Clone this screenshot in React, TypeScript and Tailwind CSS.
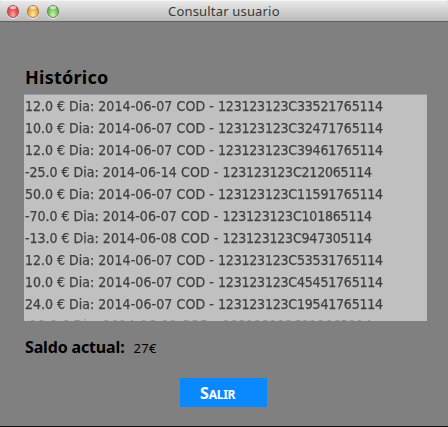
const rows = [
  ['12.0', '2014-06-07', '123123123C33521765114'],
  ['10.0', '2014-06-07', '123123123C32471765114'],
  ['12.0', '2014-06-07', '123123123C39461765114'],
  ['-25.0', '2014-06-14', '123123123C212065114'],
  ['50.0', '2014-06-07', '123123123C11591765114'],
  ['-70.0', '2014-06-07', '123123123C101865114'],
  ['-13.0', '2014-06-08', '123123123C947305114'],
  ['12.0', '2014-06-07', '123123123C53531765114'],
  ['10.0', '2014-06-07', '123123123C45451765114'],
  ['24.0', '2014-06-07', '123123123C19541765114'],
  ['-10.0', '2014-06-08', '123123123C213065114'],
];

function Light({ tone }: { tone: string }) {
  return (
    <span className={`relative block h-[13px] w-3 rounded-full border shadow-[0_1px_0_#f5f5f5] ${tone}`}>
      <span className="absolute left-[2px] top-0 h-[3px] w-[6px] rounded-full bg-white/60" />
    </span>
  );
}

export default function App() {
  return (
    <div className="flex h-[427px] w-[448px] flex-col overflow-hidden rounded-t-[3px] border-b border-[#111] bg-[#808080] font-['Noto_Sans',sans-serif] text-black">
      <header className="grid h-[22px] shrink-0 grid-cols-[168px_auto_1fr] border-b border-[#626262] bg-linear-to-b from-[#ececec] to-[#b9b9b9] shadow-[inset_0_1px_0_#f5f5f5]">
        <div className="flex gap-2 pl-[7px] pt-[5px]">
          <Light tone="border-[#a35757] bg-radial-[at_50%_85%] from-[#ffb1ad] via-[#ef555b] to-[#b83d43]" />
          <Light tone="border-[#a8804d] bg-radial-[at_50%_85%] from-[#ffeaa0] via-[#f3b653] to-[#bd7e34]" />
          <Light tone="border-[#638b55] bg-radial-[at_50%_85%] from-[#d5f4b1] via-[#88cc72] to-[#56934b]" />
        </div>
        <h1 className="whitespace-nowrap text-[13px] leading-[22px] tracking-[0.18px] text-[#383838]">Consultar usuario</h1>
      </header>
      <main className="flex flex-col pl-6">
        <h2 className="mt-[43px] h-[29px] whitespace-nowrap pl-px text-[18px] font-bold leading-[24px] tracking-[0.25px]">Histórico</h2>
        <div className="h-[227px] w-[403px] overflow-hidden border-t border-[#939ba4] bg-[#c0c0c0] pl-px">
          {rows.map(([amount, date, code]) => (
            <p key={code} className="h-[22px] w-max whitespace-pre font-['DejaVu_Sans_Condensed','DejaVu_Sans',sans-serif] text-[14px] leading-[23px] text-[#404040] blur-[0.5px] [-webkit-text-stroke:0.25px_#404040] [font-stretch:condensed] last:-mt-px last:text-[#909090] last:[-webkit-text-stroke:0]">
              <span>{`${amount} € Dia: `}</span>
              <span className="tracking-[0.1px]">{`${date} COD - `}</span>
              <span className="tracking-[-0.2px]">{code}</span>
            </p>
          ))}
        </div>
        <div className="mt-[14px] flex h-6 items-baseline gap-[9px] whitespace-nowrap pl-px">
          <span className="text-[16px] font-bold leading-6 tracking-[-0.15px]">Saldo actual:</span>
          <span className="text-[13px] leading-6 tracking-[0.3px]">27€</span>
        </div>
        <button className="ml-[156px] mt-[19px] h-[29px] w-[87px] bg-[#0a89ff] pl-5 text-left text-[16px] font-bold leading-[30px] text-white">
          S<span className="text-[12px] tracking-[-0.3px]">ALIR</span>
        </button>
      </main>
    </div>
  );
}
